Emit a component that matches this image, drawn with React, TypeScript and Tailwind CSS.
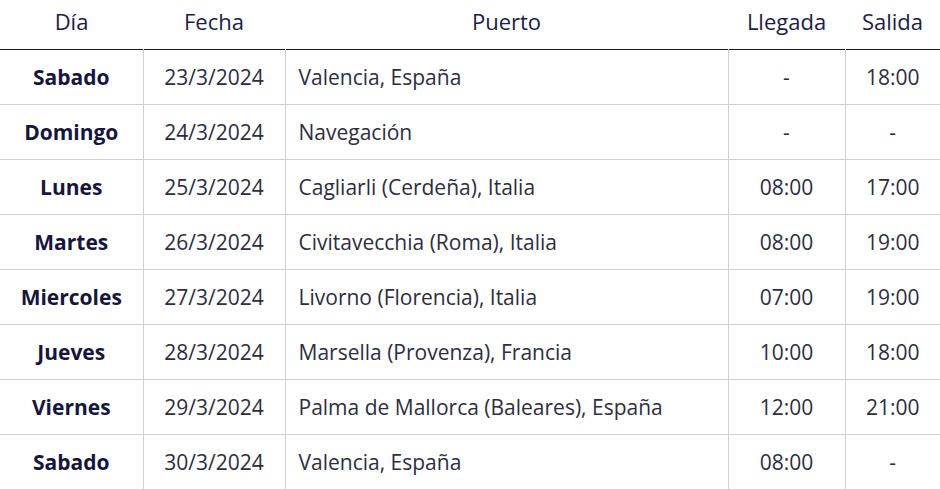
import React from 'react';

type Row = { dia: string; fecha: string; puerto: string; llegada: string; salida: string };

const rows: Row[] = [
  { dia: 'Sabado', fecha: '23/3/2024', puerto: 'Valencia, España', llegada: '-', salida: '18:00' },
  { dia: 'Domingo', fecha: '24/3/2024', puerto: 'Navegación', llegada: '-', salida: '-' },
  { dia: 'Lunes', fecha: '25/3/2024', puerto: 'Cagliarli (Cerdeña), Italia', llegada: '08:00', salida: '17:00' },
  { dia: 'Martes', fecha: '26/3/2024', puerto: 'Civitavecchia (Roma), Italia', llegada: '08:00', salida: '19:00' },
  { dia: 'Miercoles', fecha: '27/3/2024', puerto: 'Livorno (Florencia), Italia', llegada: '07:00', salida: '19:00' },
  { dia: 'Jueves', fecha: '28/3/2024', puerto: 'Marsella (Provenza), Francia', llegada: '10:00', salida: '18:00' },
  { dia: 'Viernes', fecha: '29/3/2024', puerto: 'Palma de Mallorca (Baleares), España', llegada: '12:00', salida: '21:00' },
  { dia: 'Sabado', fecha: '30/3/2024', puerto: 'Valencia, España', llegada: '08:00', salida: '-' },
];

const App: React.FC = () => {
  return (
    <div className="w-[940px] h-[490px] bg-white overflow-hidden font-['Open_Sans',sans-serif]">
      <table className="w-[940px] border-collapse table-fixed text-[21px] leading-none">
        <colgroup>
          <col className="w-[143px]" />
          <col className="w-[142px]" />
          <col className="w-[443px]" />
          <col className="w-[117px]" />
          <col className="w-[95px]" />
        </colgroup>
        {/* Cabecera */}
        <thead>
          <tr className="h-[49px] border-b border-[#1a1a1a] text-[#1c1c45] text-[22px]">
            <th className="font-medium text-center pb-[6px]">Día</th>
            <th className="font-medium text-center pb-[6px]">Fecha</th>
            <th className="font-medium text-center pb-[6px]">Puerto</th>
            <th className="font-medium text-center pb-[6px]">Llegada</th>
            <th className="font-medium text-center pb-[6px]">Salida</th>
          </tr>
        </thead>
        <tbody>
          {rows.map((r, i) => (
            <tr key={i} className="h-[55px] border-b border-[#cfcfd4] text-[#2d2d3f]">
              <td className="pt-[2px] text-center font-bold text-[#16163d]">{r.dia}</td>
              <td className="pt-[2px] text-center border-l border-[#cfcfd4]">{r.fecha}</td>
              <td className="pt-[2px] text-left pl-[13px] border-l border-[#cfcfd4]">{r.puerto}</td>
              <td className="pt-[2px] text-center border-l border-[#cfcfd4]">{r.llegada}</td>
              <td className="pt-[2px] text-center border-l border-[#cfcfd4]">{r.salida}</td>
            </tr>
          ))}
        </tbody>
      </table>
    </div>
  );
};

export default App;
